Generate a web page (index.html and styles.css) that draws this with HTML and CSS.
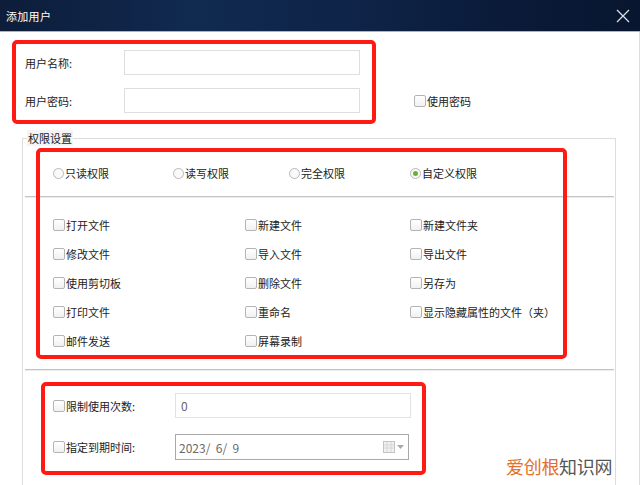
FILE: index.html
```html
<!DOCTYPE html>
<html lang="zh">
<head>
<meta charset="utf-8">
<link rel="stylesheet" href="styles.css">
</head>
<body>
<div class="dialog">
  <div class="titlebar">
    <span class="title">添加用户</span>
    <svg class="close" width="14" height="14" viewBox="0 0 14 14"><path d="M1 1L13 13M13 1L1 13" stroke="#d8dde6" stroke-width="1.3" fill="none"/></svg>
  </div>
  <div class="content">
    <div class="account">
      <span class="lbl">用户名称:</span>
      <span class="input"></span>
      <span></span>
      <span class="lbl">用户密码:</span>
      <span class="input"></span>
      <label class="check"><span class="box"></span>使用密码</label>
    </div>
    <fieldset class="group">
      <legend>权限设置</legend>
      <div class="radios">
        <label class="radio"><span class="dot"></span>只读权限</label>
        <label class="radio"><span class="dot"></span>读写权限</label>
        <label class="radio"><span class="dot"></span>完全权限</label>
        <label class="radio"><span class="dot on"></span>自定义权限</label>
      </div>
      <div class="sep"></div>
      <div class="perms">
        <label class="check"><span class="box"></span>打开文件</label>
        <label class="check"><span class="box"></span>新建文件</label>
        <label class="check"><span class="box"></span>新建文件夹</label>
        <label class="check"><span class="box"></span>修改文件</label>
        <label class="check"><span class="box"></span>导入文件</label>
        <label class="check"><span class="box"></span>导出文件</label>
        <label class="check"><span class="box"></span>使用剪切板</label>
        <label class="check"><span class="box"></span>删除文件</label>
        <label class="check"><span class="box"></span>另存为</label>
        <label class="check"><span class="box"></span>打印文件</label>
        <label class="check"><span class="box"></span>重命名</label>
        <label class="check"><span class="box"></span>显示隐藏属性的文件（夹）</label>
        <label class="check"><span class="box"></span>邮件发送</label>
        <label class="check"><span class="box"></span>屏幕录制</label>
      </div>
      <div class="sep"></div>
      <div class="limits">
        <label class="check"><span class="box"></span>限制使用次数:</label>
        <span class="input num">0</span>
        <label class="check"><span class="box"></span>指定到期时间:</label>
        <span class="input date">2023/&nbsp;&nbsp;6/&nbsp;&nbsp;9
          <span class="picker">
            <svg width="12" height="12" viewBox="0 0 12 12"><rect x="0.5" y="0.5" width="11" height="11" fill="#f2f2f2" stroke="#c4c4c4"/><path d="M1 4H11M1 7H11M4 1V11M8 1V11" stroke="#d6d6d6" stroke-width="1"/></svg>
            <svg width="7" height="4" viewBox="0 0 7 4"><path d="M0 0H7L3.5 4Z" fill="#aaa"/></svg>
          </span>
        </span>
      </div>
    </fieldset>
    <div class="mark box1"></div>
    <div class="mark box2"></div>
    <div class="mark box3"></div>
    <div class="watermark"><span class="wm-a">爱创根</span>知识网</div>
  </div>
</div>
</body>
</html>
```
FILE: styles.css
```css
html, body {
  margin: 0;
  padding: 0;
}
body {
  width: 640px;
  height: 485px;
  overflow: hidden;
  background: #fff;
  font-family: "Noto Sans CJK SC", "Noto Sans", sans-serif;
  font-size: 11px;
  color: #222;
}
.dialog {
  width: 640px;
  height: 485px;
  display: flex;
  flex-direction: column;
}
.titlebar {
  height: 31px;
  flex: none;
  display: flex;
  align-items: center;
  justify-content: space-between;
  padding: 0 10px 0 6px;
  background: linear-gradient(90deg, #0d1d3a 0%, #112a50 30%, #0e2448 55%, #0a1a38 80%, #08162f 100%);
  border-bottom: 1px solid #aab4c2;
  color: #fff;
  font-size: 11px;
}
.title { letter-spacing: 0.3px; }
.close { display: block; margin-top: 1px; }
.content {
  position: relative;
  flex: 1;
  border-right: 1px solid #dcdcdc;
}
.account {
  display: grid;
  grid-template-columns: 99px 236px 1fr;
  grid-template-rows: 25px 25px;
  row-gap: 13px;
  align-items: center;
  padding: 18px 0 0 25px;
}
.account .check { margin-left: 54px; }
.input {
  display: flex;
  align-items: center;
  box-sizing: border-box;
  height: 25px;
  border: 1px solid #dedede;
  background: #fff;
  color: #666;
  padding-left: 5px;
  font-size: 12px;
}
.group {
  margin: 17px 0 0 22px;
  width: 594px;
  box-sizing: border-box;
  border: 1px solid #dcdcdc;
  border-bottom: none;
  padding: 0;
  min-width: 0;
  height: 360px;
}
.group legend {
  margin-left: 4px;
  padding: 0 1px;
  line-height: 16px;
  background: #f4f4f4;
}
.radios {
  display: grid;
  grid-template-columns: 120px 116px 121px 1fr;
  padding: 19px 0 15px 30px;
  height: 16px;
}
.radio, .check {
  display: flex;
  align-items: center;
  height: 16px;
  white-space: nowrap;
}
.dot {
  width: 11px;
  height: 11px;
  box-sizing: border-box;
  border: 1px solid #b8b8b8;
  border-radius: 50%;
  margin-right: 1px;
  display: flex;
  align-items: center;
  justify-content: center;
  background: #fafafa;
}
.dot.on::after {
  content: "";
  width: 5px;
  height: 5px;
  border-radius: 50%;
  background: #6bb131;
}
.box {
  width: 12px;
  height: 12px;
  box-sizing: border-box;
  border: 1px solid #b4b4b4;
  border-radius: 2px;
  background: linear-gradient(#fff, #f1f1f1);
  margin-right: 1px;
  flex: none;
}
.sep {
  margin: 0 1px 0 2px;
  border-top: 1px solid #c4c4c4;
  border-bottom: 1px solid #ececec;
}
.perms {
  display: grid;
  grid-template-columns: 192px 165px 1fr;
  grid-auto-rows: 16px;
  row-gap: 13px;
  padding: 19px 0 20px 30px;
}
.limits {
  display: grid;
  grid-template-columns: 122px 236px;
  grid-template-rows: 25px 26px;
  row-gap: 16px;
  align-items: center;
  padding: 22px 0 0 30px;
}
.num { border-color: #e2e2e2; }
.date {
  border-color: #a9a9a9;
  height: 26px;
  width: 234px;
  padding-left: 3px;
  position: relative;
  color: #6a6a6a;
}
.picker {
  margin-left: auto;
  margin-right: 4px;
  display: flex;
  align-items: center;
  gap: 2px;
}
.picker svg { display: block; }
.mark {
  position: absolute;
  border: 4px solid #ff1a14;
  border-radius: 5px;
  box-sizing: border-box;
}
.box1 { left: 12px; top: 8px; width: 364px; height: 84px; }
.box2 { left: 36px; top: 116px; width: 531px; height: 211px; }
.box3 { left: 41px; top: 350px; width: 385px; height: 93px; }
.watermark {
  position: absolute;
  left: 506px;
  top: 422px;
  font-size: 18px;
  line-height: 24px;
  color: #555;
  letter-spacing: -0.3px;
}
.wm-a { color: #e2702e; }
```
